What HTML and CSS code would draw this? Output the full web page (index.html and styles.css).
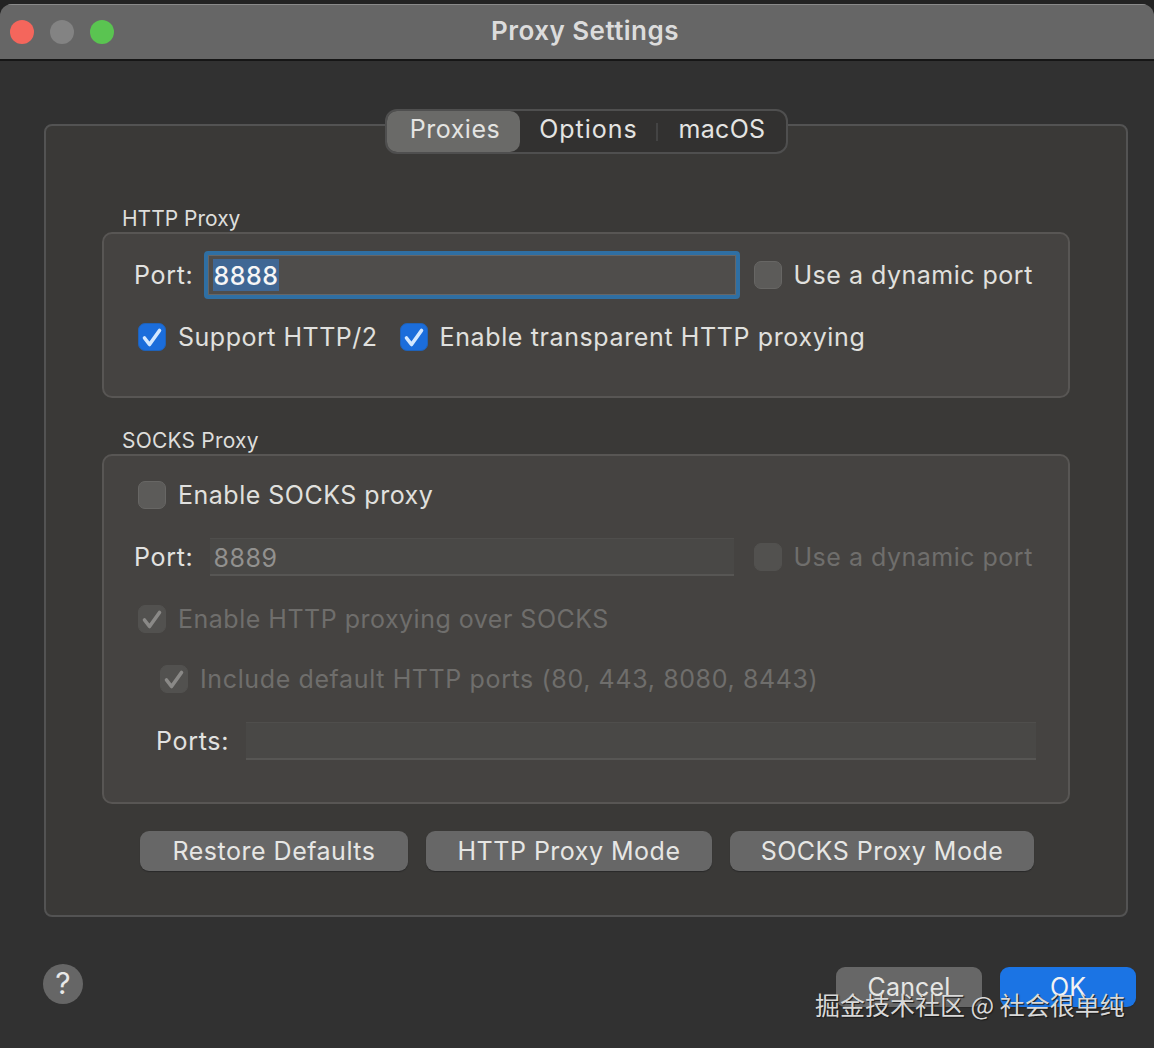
FILE: index.html
```html
<!DOCTYPE html>
<html lang="en">
<head>
<meta charset="utf-8">
<title>Proxy Settings</title>
<link rel="stylesheet" href="styles.css">
</head>
<body>
<div class="window">
  <header class="titlebar">
    <div class="lights">
      <span class="light red"></span>
      <span class="light grey"></span>
      <span class="light green"></span>
    </div>
    <h1 class="title">Proxy Settings</h1>
  </header>
  <main class="content">
    <section class="outer">
      <nav class="tabs">
        <span class="tab tab-active tab-proxies">Proxies</span>
        <span class="tab tab-options">Options</span>
        <span class="tab-sep"></span>
        <span class="tab tab-macos">macOS</span>
      </nav>

      <div class="group-label first-label">HTTP Proxy</div>
      <div class="group group-http">
        <div class="row row-port">
          <label class="label">Port:</label>
          <div class="field field-focus"><span class="selected">8888</span></div>
          <span class="check"></span>
          <span class="text">Use a dynamic port</span>
        </div>
        <div class="row row-checks">
          <span class="check on"><svg viewBox="0 0 28 28"><path d="M6.500 15l5 6.500L21.500 7.500" /></svg></span>
          <span class="text text-http2">Support HTTP/2</span>
          <span class="check on"><svg viewBox="0 0 28 28"><path d="M6.500 15l5 6.500L21.500 7.500" /></svg></span>
          <span class="text text-wide">Enable transparent HTTP proxying</span>
        </div>
      </div>

      <div class="group-label second-label">SOCKS Proxy</div>
      <div class="group group-socks">
        <div class="row row-enable">
          <span class="check"></span>
          <span class="text">Enable SOCKS proxy</span>
        </div>
        <div class="row row-port2">
          <label class="label">Port:</label>
          <div class="field field-off"><span class="dim-value">8889</span></div>
          <span class="check check-off"></span>
          <span class="text dim">Use a dynamic port</span>
        </div>
        <div class="row row-over">
          <span class="check check-off"><svg viewBox="0 0 28 28"><path d="M6.500 15l5 6.500L21.500 7.500" /></svg></span>
          <span class="text dim">Enable HTTP proxying over SOCKS</span>
        </div>
        <div class="row row-include">
          <span class="check check-off"><svg viewBox="0 0 28 28"><path d="M6.500 15l5 6.500L21.500 7.500" /></svg></span>
          <span class="text dim text-wide">Include default HTTP ports (80, 443, 8080, 8443)</span>
        </div>
        <div class="row row-ports">
          <label class="label">Ports:</label>
          <div class="field field-off field-ports"></div>
        </div>
      </div>

      <div class="mode-buttons">
        <button class="btn btn-restore">Restore Defaults</button>
        <button class="btn btn-http">HTTP Proxy Mode</button>
        <button class="btn btn-socks">SOCKS Proxy Mode</button>
      </div>
    </section>

    <footer class="footer">
      <span class="help">?</span>
      <div class="actions">
        <button class="btn btn-cancel">Cancel</button>
        <button class="btn btn-ok">OK</button>
      </div>
    </footer>
  </main>
</div>
<div class="watermark">掘金技术社区 @ 社会很单纯</div>
</body>
</html>
```
FILE: styles.css
```css
* { box-sizing: border-box; }
html, body { margin: 0; padding: 0; }
body {
  width: 1154px;
  height: 1048px;
  overflow: hidden;
  position: relative;
  background: #232323;
  font-family: "Inter", "Liberation Sans", sans-serif;
  color: #e2e2e0;
}
.window {
  margin-top: 4px;
  height: 1044px;
  background: #313131;
  border-radius: 12px 12px 0 0;
  display: flex;
  flex-direction: column;
  overflow: hidden;
}
.titlebar {
  height: 57px;
  flex: none;
  background: #666666;
  border-top: 1px solid #8a8a8a;
  border-bottom: 2px solid #161616;
  display: flex;
  align-items: center;
  justify-content: center;
  position: relative;
}
.lights {
  position: absolute;
  left: 10px;
  top: 15px;
  display: flex;
  gap: 16px;
}
.light { width: 24px; height: 24px; border-radius: 50%; }
.red { background: #f4665c; }
.grey { background: #838383; }
.green { background: #5ac451; }
.title {
  margin: 0 0 3px 16px;
  font-size: 26px;
  font-weight: 600;
  color: #dcdcdc;
  letter-spacing: .45px;
}
.content {
  flex: 1;
  padding: 63px 26px 0 44px;
  display: flex;
  flex-direction: column;
}
.outer {
  width: 1084px;
  height: 793px;
  background: #3a3937;
  border: 2px solid #535353;
  border-radius: 8px;
  display: flex;
  flex-direction: column;
  padding: 0 56px;
  flex: none;
}
.tabs {
  margin: -17px 0 0 283px;
  width: 403px;
  height: 45px;
  flex: none;
  display: flex;
  align-items: center;
  background: #323130;
  border: 2px solid #4f4f4f;
  border-radius: 12px;
  font-size: 25px;
  letter-spacing: .5px;
  position: relative;
}
.tab { display: block; text-align: center; color: #e4e4e2; height: 41px; line-height: 37px; }
.tab-active {
  background: #6a6a68;
  border-radius: 10px;
}
.tab-proxies { width: 133px; padding-left: 3px; }
.tab-options { width: 136px; letter-spacing: 1px; padding-left: 1px; }
.tab-sep { width: 2px; height: 18px; background: #444; flex: none; }
.tab-macos { width: 128px; letter-spacing: .3px; }
.group-label {
  font-size: 21px;
  line-height: 24px;
  margin-left: 20px;
  color: #dededc;
}
.first-label { margin-top: 53px; }
.second-label { margin-top: 31px; letter-spacing: .2px; }
.group {
  width: 968px;
  flex: none;
  background: #454341;
  border: 2px solid #585654;
  border-radius: 10px;
  margin-top: 1px;
  position: relative;
}
.group-http { height: 166px; padding: 15px 0 0 30px; }
.group-socks { height: 350px; padding: 25px 0 0 30px; }
.row { display: flex; align-items: center; font-size: 25px; letter-spacing: .5px; }
.label { color: #e2e2e0; letter-spacing: .7px; }
.text { color: #e0e0de; white-space: nowrap; }
.text-wide { letter-spacing: .62px; }
.dim { color: #6f6e6c; }
.row-port { height: 52px; }
.row-checks { height: 28px; margin: 22px 0 0 4px; }
.text-http2 { margin-right: 22px; }
.row-enable { height: 28px; margin-left: 4px; }
.row-port2 { margin-top: 28px; height: 40px; }
.row-over { height: 28px; margin: 28px 0 0 4px; }
.row-include { height: 28px; margin: 32px 0 0 26px; }
.row-ports { height: 40px; margin: 28px 0 0 22px; }
.check {
  width: 28px;
  height: 28px;
  flex: none;
  border-radius: 7px;
  background: #5c5b59;
  border: 1px solid #676664;
  margin-right: 12px;
  display: block;
}
.check svg { display: block; width: 28px; height: 28px; margin: -1px; overflow: visible; }
.check path { fill: none; stroke-width: 3.6; stroke-linecap: round; stroke-linejoin: round; }
.check.on { background: #1b6ddb; border-color: #1f62b8; }
.check.on path { stroke: #d4e8ff; }
.check-off { background: #52514f; border-color: #52514f; }
.check-off path { stroke: #8a8987; }
.field {
  flex: none;
}
.field-focus {
  width: 536px;
  height: 48px;
  margin-left: 10px;
  margin-right: 14px;
  border: 4px solid #2f6fa3;
  border-radius: 4px;
  background: #4f4d4b;
  outline: 1px solid #666;
  outline-offset: -5px;
  padding: 4px 0 0 5px;
}
.selected {
  display: block;
  width: 66px;
  background: #3f6794;
  color: #f6f6f6;
  font-size: 25px;
  line-height: 34px;
  height: 32px;
  padding-left: 1px;
  font-weight: 500;
}
.field-off {
  width: 524px;
  height: 38px;
  margin-left: 16px;
  margin-right: 20px;
  background: #494846;
  border-top: 1px solid #4f4e4c;
  border-bottom: 2px solid #575654;
  padding-left: 4px;
  line-height: 39px;
}
.dim-value { color: #92918f; }
.field-ports { width: 790px; margin-left: 17px; }
.mode-buttons {
  display: flex;
  gap: 18px;
  margin: 27px 0 0 38px;
}
.btn {
  height: 40px;
  border: none;
  border-radius: 9px;
  background: #676767;
  color: #e6e6e4;
  font-family: inherit;
  font-size: 25px;
  padding: 0;
  letter-spacing: .5px;
  box-shadow: 0 1px 1px #2a2a2a;
}
.btn-restore { width: 268px; }
.btn-http { width: 286px; }
.btn-socks { width: 304px; }
.footer {
  display: flex;
  align-items: flex-start;
  justify-content: space-between;
  margin-top: 47px;
  width: 1092px;
}
.help {
  width: 40px;
  height: 40px;
  border-radius: 50%;
  background: #666;
  color: #e8e8e8;
  font-size: 30px;
  text-align: center;
  line-height: 38px;
  margin-left: -1px;
}
.actions { display: flex; gap: 18px; margin-top: 3px; }
.btn-cancel { width: 146px; height: 40px; letter-spacing: .15px; }
.btn-ok { width: 136px; height: 40px; background: #1b74e4; color: #f2f2f2; letter-spacing: .15px; }
.watermark {
  position: absolute;
  left: 815px;
  top: 987px;
  font-family: "Noto Sans CJK SC", sans-serif;
  font-size: 25px;
  line-height: 34px;
  white-space: nowrap;
  color: #d9d9d9;
  text-shadow: 1px 1px 1px #1a1a1a;
}
```
